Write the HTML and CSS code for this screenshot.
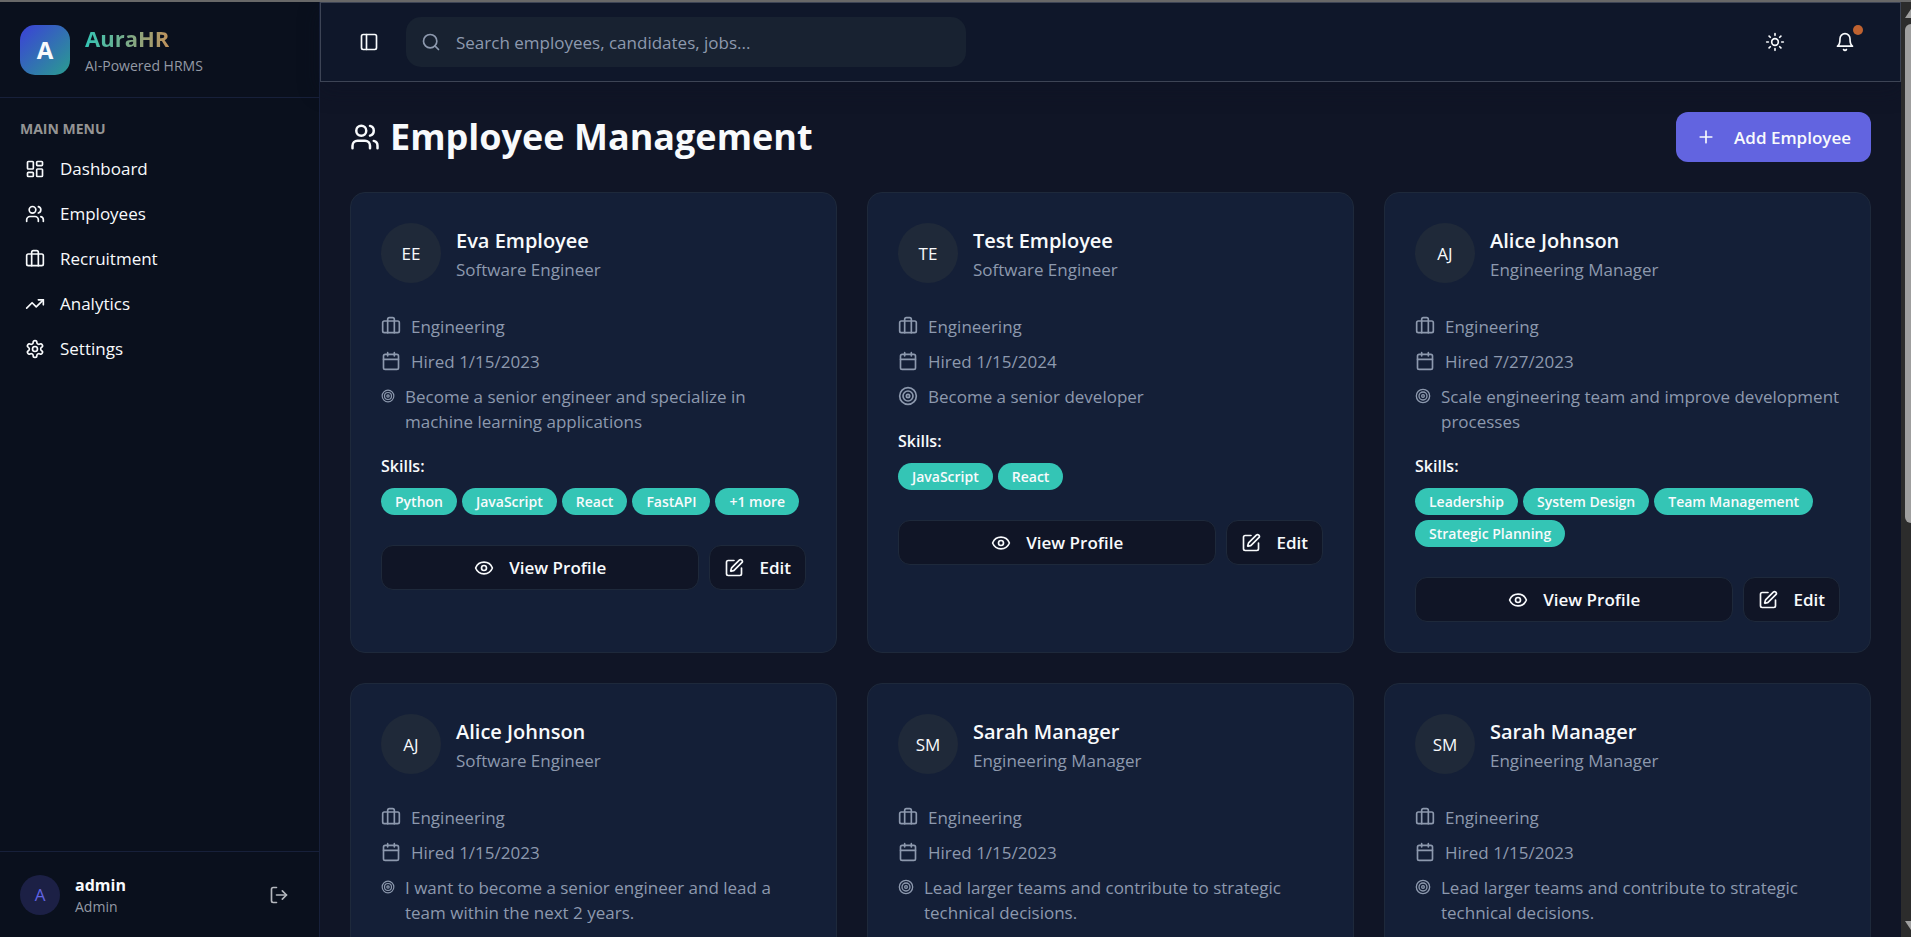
FILE: index.html
```html
<!DOCTYPE html>
<html lang="en">
<head>
<meta charset="utf-8">
<title>AuraHR - Employee Management</title>
<link rel="stylesheet" href="styles.css">
</head>
<body>
<svg class="sprite" aria-hidden="true">
  <symbol id="dashboard" viewBox="0 0 24 24"><rect width="7" height="9" x="3" y="3" rx="1"/><rect width="7" height="5" x="14" y="3" rx="1"/><rect width="7" height="9" x="14" y="12" rx="1"/><rect width="7" height="5" x="3" y="16" rx="1"/></symbol>
  <symbol id="users" viewBox="0 0 24 24"><path d="M16 21v-2a4 4 0 0 0-4-4H6a4 4 0 0 0-4 4v2"/><circle cx="9" cy="7" r="4"/><path d="M22 21v-2a4 4 0 0 0-3-3.87"/><path d="M16 3.13a4 4 0 0 1 0 7.75"/></symbol>
  <symbol id="luggage" viewBox="0 0 24 24"><rect width="20" height="14" x="2" y="6" rx="2"/><path d="M16 20V4a2 2 0 0 0-2-2h-4a2 2 0 0 0-2 2v16"/></symbol>
  <symbol id="trend" viewBox="0 0 24 24"><path d="m22 7-8.5 8.5-5-5L2 17"/><path d="M16 7h6v6"/></symbol>
  <symbol id="gear" viewBox="0 0 24 24"><path d="M12.22 2h-.44a2 2 0 0 0-2 2v.18a2 2 0 0 1-1 1.73l-.43.25a2 2 0 0 1-2 0l-.15-.08a2 2 0 0 0-2.73.73l-.22.38a2 2 0 0 0 .73 2.73l.15.1a2 2 0 0 1 1 1.72v.51a2 2 0 0 1-1 1.74l-.15.09a2 2 0 0 0-.73 2.73l.22.38a2 2 0 0 0 2.73.73l.15-.08a2 2 0 0 1 2 0l.43.25a2 2 0 0 1 1 1.73V20a2 2 0 0 0 2 2h.44a2 2 0 0 0 2-2v-.18a2 2 0 0 1 1-1.73l.43-.25a2 2 0 0 1 2 0l.15.08a2 2 0 0 0 2.73-.73l.22-.39a2 2 0 0 0-.73-2.73l-.15-.08a2 2 0 0 1-1-1.74v-.5a2 2 0 0 1 1-1.74l.15-.09a2 2 0 0 0 .73-2.73l-.22-.38a2 2 0 0 0-2.73-.73l-.15.08a2 2 0 0 1-2 0l-.43-.25a2 2 0 0 1-1-1.73V4a2 2 0 0 0-2-2z"/><circle cx="12" cy="12" r="3"/></symbol>
  <symbol id="logout" viewBox="0 0 24 24"><path d="M9 21H5a2 2 0 0 1-2-2V5a2 2 0 0 1 2-2h4"/><path d="m16 17 5-5-5-5"/><path d="M21 12H9"/></symbol>
  <symbol id="panel" viewBox="0 0 24 24"><rect width="18" height="18" x="3" y="3" rx="2"/><path d="M9 3v18"/></symbol>
  <symbol id="search" viewBox="0 0 24 24"><circle cx="11" cy="11" r="8"/><path d="m21 21-4.3-4.3"/></symbol>
  <symbol id="sun" viewBox="0 0 24 24"><circle cx="12" cy="12" r="4"/><path d="M12 2v2M12 20v2M4.93 4.93l1.41 1.41M17.66 17.66l1.41 1.41M2 12h2M20 12h2M6.34 17.66l-1.41 1.41M19.07 4.93l-1.41 1.41"/></symbol>
  <symbol id="bell" viewBox="0 0 24 24"><path d="M6 8a6 6 0 0 1 12 0c0 7 3 9 3 9H3s3-2 3-9"/><path d="M10.3 21a1.94 1.94 0 0 0 3.4 0"/></symbol>
  <symbol id="plus" viewBox="0 0 24 24"><path d="M5 12h14M12 5v14"/></symbol>
  <symbol id="calendar" viewBox="0 0 24 24"><path d="M8 2v4M16 2v4"/><rect width="18" height="18" x="3" y="4" rx="2"/><path d="M3 10h18"/></symbol>
  <symbol id="target" viewBox="0 0 24 24"><circle cx="12" cy="12" r="10"/><circle cx="12" cy="12" r="6"/><circle cx="12" cy="12" r="2"/></symbol>
  <symbol id="eye" viewBox="0 0 24 24"><path d="M2.06 12.35a1 1 0 0 1 0-.7 10.75 10.75 0 0 1 19.88 0 1 1 0 0 1 0 .7 10.75 10.75 0 0 1-19.88 0"/><circle cx="12" cy="12" r="3"/></symbol>
  <symbol id="edit" viewBox="0 0 24 24"><path d="M12 3H5a2 2 0 0 0-2 2v14a2 2 0 0 0 2 2h14a2 2 0 0 0 2-2v-7"/><path d="M18.38 2.62a1 1 0 0 1 3 3l-9.01 9.01a2 2 0 0 1-.85.51l-2.87.84a.5.5 0 0 1-.62-.62l.84-2.87a2 2 0 0 1 .5-.86z"/></symbol>
</svg>
<div class="app">
  <aside class="sidebar">
    <div class="brand">
      <div class="logo">A</div>
      <div>
        <div class="brand-name">AuraHR</div>
        <div class="brand-sub">AI-Powered HRMS</div>
      </div>
    </div>
    <nav class="menu" aria-labelledby="menu-title">
      <h2 class="menu-title" id="menu-title">MAIN MENU</h2>
      <a class="menu-item" href="#dashboard"><svg class="icon"><use href="#dashboard"/></svg>Dashboard</a>
      <a class="menu-item" href="#employees"><svg class="icon"><use href="#users"/></svg>Employees</a>
      <a class="menu-item" href="#recruitment"><svg class="icon"><use href="#luggage"/></svg>Recruitment</a>
      <a class="menu-item" href="#analytics"><svg class="icon"><use href="#trend"/></svg>Analytics</a>
      <a class="menu-item" href="#settings"><svg class="icon"><use href="#gear"/></svg>Settings</a>
    </nav>
    <div class="account">
      <div class="account-avatar">A</div>
      <div class="account-text">
        <div class="account-name">admin</div>
        <div class="account-role">Admin</div>
      </div>
      <button class="icon-button logout" aria-label="Log out"><svg class="icon"><use href="#logout"/></svg></button>
    </div>
  </aside>

  <div class="main">
    <header class="topbar">
      <button class="icon-button" aria-label="Toggle sidebar"><svg class="icon"><use href="#panel"/></svg></button>
      <label class="search">
        <svg class="icon"><use href="#search"/></svg>
        <input class="search-input" type="search" aria-label="Search" placeholder="Search employees, candidates, jobs...">
      </label>
      <div class="topbar-actions">
        <button class="icon-button" aria-label="Toggle theme"><svg class="icon"><use href="#sun"/></svg></button>
        <button class="icon-button" aria-label="Notifications"><svg class="icon"><use href="#bell"/></svg><span class="dot"></span></button>
      </div>
    </header>

    <main class="content">
      <div class="page-head">
        <h1 class="page-title"><svg class="icon icon-large"><use href="#users"/></svg>Employee Management</h1>
        <button class="add-button"><svg class="icon"><use href="#plus"/></svg>Add Employee</button>
      </div>

      <div class="cards">
        <article class="card">
          <div class="person"><div class="avatar">EE</div><div><h3 class="name">Eva Employee</h3><p class="role">Software Engineer</p></div></div>
          <ul class="facts">
            <li class="fact"><svg class="icon"><use href="#luggage"/></svg>Engineering</li>
            <li class="fact"><svg class="icon"><use href="#calendar"/></svg>Hired 1/15/2023</li>
            <li class="fact"><svg class="icon icon-small"><use href="#target"/></svg><span>Become a senior engineer and specialize in machine learning applications</span></li>
          </ul>
          <h4 class="skills-title">Skills:</h4>
          <div class="tags"><span class="tag">Python</span><span class="tag">JavaScript</span><span class="tag">React</span><span class="tag">FastAPI</span><span class="tag">+1 more</span></div>
          <div class="actions"><button class="button button-wide"><svg class="icon"><use href="#eye"/></svg>View Profile</button><button class="button"><svg class="icon"><use href="#edit"/></svg>Edit</button></div>
        </article>

        <article class="card">
          <div class="person"><div class="avatar">TE</div><div><h3 class="name">Test Employee</h3><p class="role">Software Engineer</p></div></div>
          <ul class="facts">
            <li class="fact"><svg class="icon"><use href="#luggage"/></svg>Engineering</li>
            <li class="fact"><svg class="icon"><use href="#calendar"/></svg>Hired 1/15/2024</li>
            <li class="fact"><svg class="icon"><use href="#target"/></svg><span>Become a senior developer</span></li>
          </ul>
          <h4 class="skills-title">Skills:</h4>
          <div class="tags"><span class="tag">JavaScript</span><span class="tag">React</span></div>
          <div class="actions"><button class="button button-wide"><svg class="icon"><use href="#eye"/></svg>View Profile</button><button class="button"><svg class="icon"><use href="#edit"/></svg>Edit</button></div>
        </article>

        <article class="card">
          <div class="person"><div class="avatar">AJ</div><div><h3 class="name">Alice Johnson</h3><p class="role">Engineering Manager</p></div></div>
          <ul class="facts">
            <li class="fact"><svg class="icon"><use href="#luggage"/></svg>Engineering</li>
            <li class="fact"><svg class="icon"><use href="#calendar"/></svg>Hired 7/27/2023</li>
            <li class="fact"><svg class="icon icon-medium"><use href="#target"/></svg><span>Scale engineering team and improve development processes</span></li>
          </ul>
          <h4 class="skills-title">Skills:</h4>
          <div class="tags"><span class="tag">Leadership</span><span class="tag">System Design</span><span class="tag">Team Management</span><span class="tag">Strategic Planning</span></div>
          <div class="actions"><button class="button button-wide"><svg class="icon"><use href="#eye"/></svg>View Profile</button><button class="button"><svg class="icon"><use href="#edit"/></svg>Edit</button></div>
        </article>

        <article class="card">
          <div class="person"><div class="avatar">AJ</div><div><h3 class="name">Alice Johnson</h3><p class="role">Software Engineer</p></div></div>
          <ul class="facts">
            <li class="fact"><svg class="icon"><use href="#luggage"/></svg>Engineering</li>
            <li class="fact"><svg class="icon"><use href="#calendar"/></svg>Hired 1/15/2023</li>
            <li class="fact"><svg class="icon icon-small"><use href="#target"/></svg><span>I want to become a senior engineer and lead a team within the next 2 years.</span></li>
          </ul>
        </article>

        <article class="card">
          <div class="person"><div class="avatar">SM</div><div><h3 class="name">Sarah Manager</h3><p class="role">Engineering Manager</p></div></div>
          <ul class="facts">
            <li class="fact"><svg class="icon"><use href="#luggage"/></svg>Engineering</li>
            <li class="fact"><svg class="icon"><use href="#calendar"/></svg>Hired 1/15/2023</li>
            <li class="fact"><svg class="icon icon-medium"><use href="#target"/></svg><span>Lead larger teams and contribute to strategic technical decisions.</span></li>
          </ul>
        </article>

        <article class="card">
          <div class="person"><div class="avatar">SM</div><div><h3 class="name">Sarah Manager</h3><p class="role">Engineering Manager</p></div></div>
          <ul class="facts">
            <li class="fact"><svg class="icon"><use href="#luggage"/></svg>Engineering</li>
            <li class="fact"><svg class="icon"><use href="#calendar"/></svg>Hired 1/15/2023</li>
            <li class="fact"><svg class="icon icon-medium"><use href="#target"/></svg><span>Lead larger teams and contribute to strategic technical decisions.</span></li>
          </ul>
        </article>
      </div>
    </main>
  </div>

  <div class="scrollbar" aria-hidden="true">
    <svg class="scroll-arrow" viewBox="0 0 10 12"><path d="M4 11 10 2V11Z"/></svg>
    <div class="scroll-track"><div class="scroll-thumb"></div></div>
    <svg class="scroll-arrow" viewBox="0 0 10 12"><path d="M4 1 10 10V1Z"/></svg>
  </div>
</div>
</body>
</html>
```
FILE: styles.css
```css
* { box-sizing: border-box; }

body {
  margin: 0;
  background: #101526;
  color: #f8fafc;
  font: 17px/25px "Open Sans", "Noto Sans", sans-serif;
}

h1, h2, h3, h4, p, ul { margin: 0; padding: 0; list-style: none; }
button, input { font: inherit; color: inherit; border: 0; background: none; }

.sprite { display: none; }

.icon {
  flex: none;
  width: 20px;
  height: 20px;
  fill: none;
  stroke: currentColor;
  stroke-width: 2;
  stroke-linecap: round;
  stroke-linejoin: round;
}
.icon-small { width: 14px; }
.icon-medium { width: 16px; }
.icon-large { width: 30px; height: 30px; }

.app {
  display: flex;
  height: 100vh;
  overflow: hidden;
  border-top: 2px solid #686868;
}

.sidebar {
  flex: none;
  display: flex;
  flex-direction: column;
  width: 320px;
  background: #0a101d;
  border-right: 1px solid #17203a;
}

.brand {
  display: flex;
  align-items: center;
  gap: 15px;
  height: 96px;
  padding: 0 20px;
  border-bottom: 1px solid #17203a;
}
.logo {
  display: grid;
  place-items: center;
  width: 50px;
  height: 50px;
  border-radius: 15px;
  background: linear-gradient(135deg, #3b40d8, #2a9d90);
  font-size: 24px;
  font-weight: 700;
}
.brand-name {
  width: fit-content;
  padding-top: 2px;
  background: linear-gradient(90deg, #34c5b5, #c0925c);
  background-clip: text;
  color: transparent;
  font-size: 22px;
  font-weight: 700;
  line-height: 30px;
}
.brand-sub { color: #949aa5; font-size: 14px; }

.menu { flex: 1; padding: 18px 15px; }
.menu-title {
  padding: 0 5px 5px;
  color: #949494;
  font-size: 14px;
  font-weight: 700;
}
.menu-item {
  display: flex;
  align-items: center;
  gap: 15px;
  height: 45px;
  padding: 0 10px;
  color: inherit;
  text-decoration: none;
}

.account {
  display: flex;
  align-items: center;
  gap: 15px;
  height: 86px;
  padding: 0 20px;
  border-top: 1px solid #17203a;
}
.account-avatar {
  display: grid;
  place-items: center;
  width: 40px;
  height: 40px;
  border-radius: 50%;
  background: #1c2045;
  color: #6164e3;
}
.account-text { flex: 1; padding-top: 2px; line-height: 22px; }
.account-name { font-size: 16px; font-weight: 700; }
.account-role { color: #949aa5; font-size: 14px; }

.icon-button {
  position: relative;
  display: grid;
  place-items: center;
  width: 40px;
  height: 40px;
  padding: 0;
}
.logout { color: #b5b8be; }

.main { flex: 1; display: flex; flex-direction: column; min-width: 0; }

.topbar {
  flex: none;
  display: flex;
  align-items: center;
  gap: 17px;
  height: 80px;
  padding: 0 35px 0 28px;
  border: 1px solid #3d4455;
  background: #0f172a;
  box-shadow: 0 8px 20px #0c122266;
}
.search {
  display: flex;
  align-items: center;
  gap: 15px;
  width: 560px;
  height: 50px;
  padding: 0 15px;
  border-radius: 15px;
  background: #182231;
  color: #8d99ae;
}
.search-input { flex: 1; min-width: 0; padding: 0; outline: 0; }
.search-input::placeholder { color: #8d99ae; opacity: 1; }
.topbar-actions { display: flex; gap: 30px; margin-left: auto; }
.dot {
  position: absolute;
  top: 3px;
  right: 2px;
  width: 10px;
  height: 10px;
  border-radius: 50%;
  background: #bf6230;
}

.content { flex: 1; min-height: 0; overflow: hidden; padding: 30px; }

.page-head {
  display: flex;
  align-items: center;
  justify-content: space-between;
  height: 50px;
  margin-bottom: 30px;
}
.page-title {
  display: flex;
  align-items: center;
  gap: 10px;
  font-size: 36px;
  line-height: 54px;
}
.add-button {
  display: flex;
  align-items: center;
  gap: 18px;
  height: 50px;
  padding: 0 20px;
  border-radius: 12px;
  background: #6264e0;
  font-weight: 600;
}

.cards {
  display: grid;
  grid-template-columns: repeat(3, minmax(0, 1fr));
  gap: 30px;
}
.card {
  padding: 30px;
  border: 1px solid #1e293b;
  border-radius: 15px;
  background: #141f37;
}
.person { display: flex; align-items: center; gap: 15px; margin-bottom: 31px; }
.avatar {
  display: grid;
  place-items: center;
  width: 60px;
  height: 60px;
  border-radius: 50%;
  background: #1f2939;
}
.name { padding-top: 2px; font-size: 20px; font-weight: 600; line-height: 30px; }
.role { padding-top: 1px; color: #8d99ae; }
.facts {
  display: flex;
  flex-direction: column;
  gap: 10px;
  margin-bottom: 20px;
  color: #8d99ae;
}
.fact { display: flex; gap: 10px; }
.fact .icon { margin-top: 2px; }

.skills-title { font-size: 16px; font-weight: 600; margin-bottom: 9px; }
.tags { display: flex; flex-wrap: wrap; gap: 5px; margin-bottom: 30px; }
.tag {
  padding: 0 14px;
  border-radius: 14px;
  background: #34c5b5;
  font-size: 14px;
  font-weight: 600;
  line-height: 27px;
}
.actions { display: flex; gap: 10px; }
.button {
  display: flex;
  align-items: center;
  justify-content: center;
  gap: 15px;
  height: 45px;
  padding: 0 14px;
  border: 1px solid #1e293b;
  border-radius: 12px;
  background: #101526;
  font-weight: 600;
}
.button-wide { flex: 1; }

.scrollbar {
  flex: none;
  display: flex;
  flex-direction: column;
  gap: 5px;
  width: 10px;
  padding: 5px 0;
  background: #2c2c2c;
}
.scroll-arrow { width: 10px; height: 12px; fill: #9f9f9f; }
.scroll-track { flex: 1; padding-left: 4px; }
.scroll-thumb { height: 56%; border-radius: 6px 0 0 6px; background: #9f9f9f; }
```
